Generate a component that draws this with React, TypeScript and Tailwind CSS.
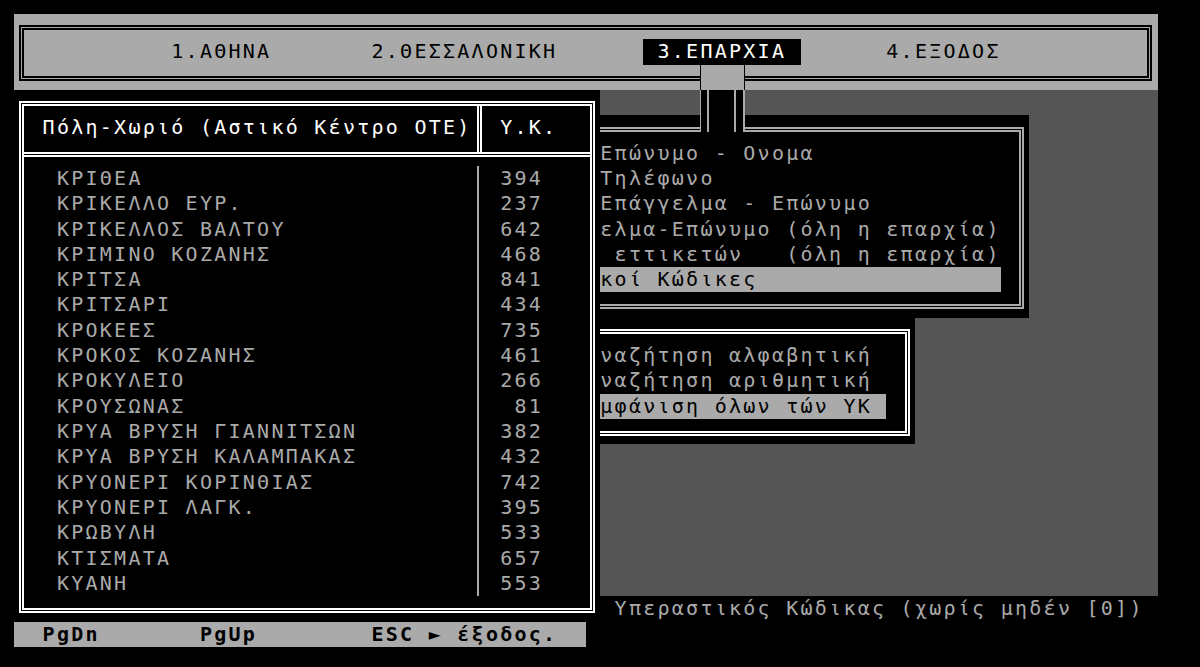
import React from "react";

// Text-mode cell: 80 columns x 25 rows on a 1144x633 screen (14.3 x 25.32 px per cell).
const mono =
  "font-['DejaVu_Sans_Mono',monospace] text-[20px] leading-[25.32px] tracking-[2.259px] whitespace-pre";

const places: [string, number][] = [
  ["ΚΡΙΘΕΑ", 394],
  ["ΚΡΙΚΕΛΛΟ ΕΥΡ.", 237],
  ["ΚΡΙΚΕΛΛΟΣ ΒΑΛΤΟΥ", 642],
  ["ΚΡΙΜΙΝΟ ΚΟΖΑΝΗΣ", 468],
  ["ΚΡΙΤΣΑ", 841],
  ["ΚΡΙΤΣΑΡΙ", 434],
  ["ΚΡΟΚΕΕΣ", 735],
  ["ΚΡΟΚΟΣ ΚΟΖΑΝΗΣ", 461],
  ["ΚΡΟΚΥΛΕΙΟ", 266],
  ["ΚΡΟΥΣΩΝΑΣ", 81],
  ["ΚΡΥΑ ΒΡΥΣΗ ΓΙΑΝΝΙΤΣΩΝ", 382],
  ["ΚΡΥΑ ΒΡΥΣΗ ΚΑΛΑΜΠΑΚΑΣ", 432],
  ["ΚΡΥΟΝΕΡΙ ΚΟΡΙΝΘΙΑΣ", 742],
  ["ΚΡΥΟΝΕΡΙ ΛΑΓΚ.", 395],
  ["ΚΡΩΒΥΛΗ", 533],
  ["ΚΤΙΣΜΑΤΑ", 657],
  ["ΚΥΑΝΗ", 553],
];

// Visible part of the province sub-menu rows (from column 41, right of the list window).
const provinceItems = [
  "Επώνυμο - Ονομα",
  "Τηλέφωνο",
  "Επάγγελμα - Επώνυμο",
  "ελμα-Επώνυμο (όλη η επαρχία)",
  " εττικετών   (όλη η επαρχία)",
];

// Visible part of the postal-code sub-menu rows (from column 41).
const codeItems = ["ναζήτηση αλφαβητική", "ναζήτηση αριθμητική"];

function MenuBar() {
  return (
    <div className="h-[75.96px] bg-[#aaaaaa] pt-[11px] pl-[5px] pr-[6px] pb-[9.3px]">
      <div className="h-full border-[5px] border-double border-black pt-[9.32px] pl-[147.3px]">
        <div className={`${mono} text-black`}>
          {"1.ΑΘΗΝΑ       2.ΘΕΣΣΑΛΟΝΙΚΗ      "}
          <span className="inline-block h-[25.32px] bg-black text-white">{" 3.ΕΠΑΡΧΙΑ "}</span>
          {"      4.ΕΞΟΔΟΣ"}
        </div>
      </div>
    </div>
  );
}

function PlaceList() {
  return (
    <div className="absolute left-0 top-[75.96px] z-20 w-[586.3px] h-[531.72px] bg-black pt-[11.5px] px-[5px] pb-[8.82px]">
      <div className="h-full border-[5px] border-double border-white flex flex-col">
        {/* header */}
        <div className="flex h-[45.64px]">
          <div className={`${mono} w-[452.6px] pt-[8.82px] pl-[18.6px] text-white`}>
            {"Πόλη-Χωριό (Αστικό Κέντρο ΟΤΕ)"}
          </div>
          <div className="w-[5px] border-l-[5px] border-double border-white" />
          <div className={`${mono} flex-1 pt-[8.82px] pl-[18.6px] text-white`}>{"Υ.Κ."}</div>
        </div>
        <div className="h-[5px] border-t-[5px] border-double border-white" />
        <div className="h-[8.82px]" />
        {/* rows */}
        <div className="flex">
          <div className={`${mono} w-[453.3px] pl-[32.9px] text-[#aaaaaa]`}>
            {places.map(([name]) => (
              <div key={name}>{name}</div>
            ))}
          </div>
          <div className="w-[1.5px] bg-[#aaaaaa]" />
          <div className={`${mono} flex-1 pl-[21.4px] text-[#aaaaaa]`}>
            {places.map(([name, code]) => (
              <div key={name}>{String(code).padStart(3, " ")}</div>
            ))}
          </div>
        </div>
      </div>
    </div>
  );
}

function ProvinceMenu() {
  return (
    <div className="absolute left-[429px] top-[101.28px] z-10 w-[586.3px] h-[202.56px] bg-black pt-[11.5px] px-[5px] pb-[8.82px]">
      <div className="h-full border-[5px] border-double border-[#aaaaaa] pt-[8.82px] pl-[4.3px]">
        <div className={`${mono} text-[#aaaaaa]`}>
          {provinceItems.map((t) => (
            <div key={t} className="pl-[143px]">
              {t}
            </div>
          ))}
          <div className="w-[543.4px] pl-[143px] bg-[#aaaaaa] text-black">{"κοί Κώδικες"}</div>
        </div>
      </div>
    </div>
  );
}

function CodeMenu() {
  return (
    <div className="absolute left-[500.5px] top-[303.84px] z-10 w-[400.4px] h-[126.6px] bg-black pt-[11.5px] px-[5px] pb-[8.82px]">
      <div className="h-full border-[5px] border-double border-white pt-[8.82px] pl-[4.3px]">
        <div className={`${mono} text-[#aaaaaa]`}>
          {codeItems.map((t) => (
            <div key={t} className="pl-[71.5px]">
              {t}
            </div>
          ))}
          <div className="w-[357.5px] pl-[71.5px] bg-[#aaaaaa] text-black">{"μφάνιση όλων τών ΥΚ"}</div>
        </div>
      </div>
    </div>
  );
}

// Drop line from the selected menu title down into its sub-menu frame.
function MenuConnector() {
  return (
    <>
      <div className="absolute left-[686px] top-[50.64px] z-10 w-[44.5px] h-[25.32px] bg-[#aaaaaa] border-x-[1.5px] border-black" />
      <div className="absolute left-[686px] top-[75.96px] z-10 w-[45px] h-[41.82px] bg-black flex justify-between">
        <div className="w-[9px] h-full border-l-[1.5px] border-r-[2px] border-[#aaaaaa]" />
        <div className="w-[11px] h-full border-l-[2px] border-r-[2px] border-[#aaaaaa]" />
      </div>
    </>
  );
}

export default function App() {
  return (
    <div className="w-[1200px] h-[667px] bg-black pl-[14px] pt-[14px] overflow-hidden">
      <div className="relative w-[1144px] h-[633px]">
        <MenuBar />
        <div className="h-[506.4px] bg-[#555555]" />
        <div className={`${mono} h-[25.32px] pl-[600.6px] text-[#aaaaaa]`}>
          {"Υπεραστικός Κώδικας (χωρίς μηδέν [0])"}
        </div>
        <div className={`${mono} h-[25.32px] w-[572px] bg-[#aaaaaa] text-black font-bold`}>
          {"  PgDn       PgUp        ESC ► έξοδος."}
        </div>

        <ProvinceMenu />
        <CodeMenu />
        <MenuConnector />
        <PlaceList />
      </div>
    </div>
  );
}
